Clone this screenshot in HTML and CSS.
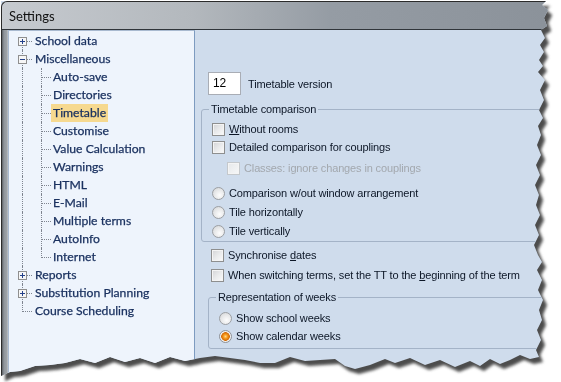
FILE: index.html
```html
<!DOCTYPE html>
<html>
<head>
<meta charset="utf-8">
<link rel="stylesheet" href="styles.css">
</head>
<body>
<div class="shot">
  <div class="win">
    <div class="titlebar"><span class="title">Settings</span></div>
    <div class="main">
      <div class="frame"></div>
      <div class="tree">
        <div class="node lvl0"><span class="c f"><span class="bx"><svg width="9" height="9" viewBox="0 0 9 9"><rect x="0.5" y="0.5" width="8" height="8" fill="#f6f6f6" stroke="#8f8f8f"/><path d="M2 4.5h5M4.5 2v5" stroke="#24418a"/></svg></span></span><span class="lbl">School data</span></div>
        <div class="node lvl0"><span class="c t"><span class="bx"><svg width="9" height="9" viewBox="0 0 9 9"><rect x="0.5" y="0.5" width="8" height="8" fill="#f6f6f6" stroke="#8f8f8f"/><path d="M2 4.5h5" stroke="#24418a"/></svg></span></span><span class="lbl">Miscellaneous</span></div>
        <div class="node lvl1"><span class="c v"></span><span class="c t"></span><span class="lbl">Auto-save</span></div>
        <div class="node lvl1"><span class="c v"></span><span class="c t"></span><span class="lbl">Directories</span></div>
        <div class="node lvl1"><span class="c v"></span><span class="c t"></span><span class="lbl sel">Timetable</span></div>
        <div class="node lvl1"><span class="c v"></span><span class="c t"></span><span class="lbl">Customise</span></div>
        <div class="node lvl1"><span class="c v"></span><span class="c t"></span><span class="lbl">Value Calculation</span></div>
        <div class="node lvl1"><span class="c v"></span><span class="c t"></span><span class="lbl">Warnings</span></div>
        <div class="node lvl1"><span class="c v"></span><span class="c t"></span><span class="lbl">HTML</span></div>
        <div class="node lvl1"><span class="c v"></span><span class="c t"></span><span class="lbl">E-Mail</span></div>
        <div class="node lvl1"><span class="c v"></span><span class="c t"></span><span class="lbl">Multiple terms</span></div>
        <div class="node lvl1"><span class="c v"></span><span class="c t"></span><span class="lbl">AutoInfo</span></div>
        <div class="node lvl1"><span class="c v"></span><span class="c l"></span><span class="lbl">Internet</span></div>
        <div class="node lvl0"><span class="c t"><span class="bx"><svg width="9" height="9" viewBox="0 0 9 9"><rect x="0.5" y="0.5" width="8" height="8" fill="#f6f6f6" stroke="#8f8f8f"/><path d="M2 4.5h5M4.5 2v5" stroke="#24418a"/></svg></span></span><span class="lbl">Reports</span></div>
        <div class="node lvl0"><span class="c t"><span class="bx"><svg width="9" height="9" viewBox="0 0 9 9"><rect x="0.5" y="0.5" width="8" height="8" fill="#f6f6f6" stroke="#8f8f8f"/><path d="M2 4.5h5M4.5 2v5" stroke="#24418a"/></svg></span></span><span class="lbl">Substitution Planning</span></div>
        <div class="node lvl0"><span class="c l"></span><span class="lbl">Course Scheduling</span></div>
      </div>
      <div class="content">
        <div class="verrow"><span class="inp">12</span><span class="txt">Timetable version</span></div>
        <fieldset class="grp g1">
          <legend>Timetable comparison</legend>
          <div class="opt r1"><span class="cb"></span><span><u>W</u>ithout rooms</span></div>
          <div class="opt"><span class="cb"></span><span>Detailed comparison for couplings</span></div>
          <div class="opt dis r3"><span class="cb"></span><span>Classes: ignore changes in couplings</span></div>
          <div class="opt r4"><span class="rb"></span><span>Comparison w/out window arrangement</span></div>
          <div class="opt r5"><span class="rb"></span><span>Tile horizontally</span></div>
          <div class="opt r5"><span class="rb"></span><span>Tile vertically</span></div>
        </fieldset>
        <div class="opt s1"><span class="cb"></span><span>Synchronise <u>d</u>ates</span></div>
        <div class="opt s2"><span class="cb"></span><span>When switching terms, set the TT to the <u>b</u>eginning of the term</span></div>
        <fieldset class="grp g2">
          <legend>Representation of weeks</legend>
          <div class="opt w1"><span class="rb"></span><span>Show school weeks</span></div>
          <div class="opt"><span class="rb on"></span><span>Show calendar weeks</span></div>
        </fieldset>
      </div>
    </div>
  </div>
</div>
</body>
</html>
```
FILE: styles.css
```css
html, body {
  margin: 0;
  background: #ffffff;
}
.shot {
  width: 561px;
  height: 382px;
  box-sizing: border-box;
  padding: 1px 0 0 1px;
  filter: drop-shadow(4px 5px 1.5px rgba(45, 45, 45, 0.85));
  overflow: hidden;
}
.win {
  width: 548px;
  height: 378px;
  display: flex;
  flex-direction: column;
  background: #cfdcec;
  clip-path: polygon(0 0, 545px 0, 541px 4px, 547px 9px, 543px 17px, 546px 25px, 540px 29px, 544px 37px, 539px 44px, 543px 51px, 538px 59px, 542px 65px, 537px 71px, 544px 79px, 539px 89px, 543px 99px, 538px 109px, 542px 117px, 537px 125px, 540px 134px, 536px 144px, 540px 154px, 535px 164px, 539px 174px, 534px 184px, 538px 194px, 535px 204px, 539px 214px, 534px 224px, 538px 234px, 533px 244px, 537px 254px, 541px 261px, 536px 269px, 541px 279px, 537px 289px, 542px 299px, 538px 309px, 541px 319px, 536px 329px, 540px 339px, 535px 349px, 538px 356px, 529px 358px, 519px 354px, 509px 359px, 499px 363px, 489px 358px, 479px 365px, 469px 360px, 454px 366px, 439px 359px, 424px 364px, 409px 357px, 394px 362px, 384px 358px, 369px 364px, 354px 368px, 344px 365px, 334px 358px, 319px 359px, 304px 360px, 289px 356px, 274px 362px, 259px 362px, 244px 359px, 229px 357px, 214px 355px, 199px 357px, 184px 360px, 169px 356px, 154px 362px, 139px 357px, 124px 361px, 109px 356px, 94px 362px, 79px 358px, 64px 362px, 49px 364px, 34px 365px, 19px 370px, 9px 371px, 0 375px);
}
.titlebar {
  height: 27px;
  flex: none;
  display: flex;
  align-items: center;
  padding-left: 7px;
  border-top: 1px solid #2b2b2b;
  border-left: 1px solid #2b2b2b;
  border-bottom: 1px solid #30353a;
  border-radius: 6px 0 0 0;
  background: linear-gradient(90deg, #c6cacf 0%, #b3b8bd 35%, #959ca4 60%, #8b929a 100%);
}
.title {
  font-family: "Lato", "Noto Sans", sans-serif;
  font-size: 13px;
  color: #111111;
}
.main {
  flex: 1;
  display: flex;
  min-height: 0;
}
.frame {
  width: 6px;
  flex: none;
  background: linear-gradient(90deg, #5d6166 0px, #8f959b 2px, #9ea3a8 5px, #c7ccd2 6px);
  border-left: 1px solid #2b2b2b;
}
.tree {
  width: 187px;
  flex: none;
  box-sizing: border-box;
  background: #eef4fc;
  border: 1px solid #a9bad0;
  border-right-color: #7d9bc0;
  padding: 1px 0 0 4px;
  font-family: "Lato", "Noto Sans", sans-serif;
  font-size: 12.2px;
  color: #1b3260;
  -webkit-text-stroke: 0.25px #1b3260;
}
.node {
  height: 18px;
  display: flex;
  align-items: center;
}
.c {
  width: 19px;
  height: 18px;
  flex: none;
  position: relative;
}
.c::before, .c::after {
  content: "";
  position: absolute;
}
.c.v::before, .c.t::before {
  left: 9px;
  top: 0;
  bottom: 0;
  border-left: 1px dotted #7f8590;
}
.c.f::before {
  left: 9px;
  top: 9px;
  bottom: 0;
  border-left: 1px dotted #7f8590;
}
.c.l::before {
  left: 9px;
  top: 0;
  height: 10px;
  border-left: 1px dotted #7f8590;
}
.c.t::after, .c.f::after, .c.l::after {
  left: 10px;
  right: 0;
  top: 9px;
  border-top: 1px dotted #7f8590;
}
.bx {
  position: absolute;
  left: 5px;
  top: 5px;
  width: 9px;
  height: 9px;
  z-index: 1;
  display: block;
  -webkit-text-stroke: 0;
}
.bx svg {
  display: block;
}
.lbl {
  padding: 0 2px;
  line-height: 18px;
  white-space: nowrap;
}
.lvl0 .lbl {
  margin-left: 1px;
}
.lbl.sel {
  background: #f6d98f;
}
.content {
  flex: 1;
  font-family: "Liberation Sans", Arial, sans-serif;
  font-size: 11px;
  letter-spacing: -0.13px;
  color: #0c1626;
  min-width: 0;
}
.verrow {
  display: flex;
  align-items: center;
  margin: 42px 0 0 13px;
}
.inp {
  width: 33px;
  height: 23px;
  box-sizing: border-box;
  border: 1px solid #a9adb5;
  background: #ffffff;
  padding-left: 4px;
  font-size: 12px;
  line-height: 21px;
  color: #000;
}
.txt {
  margin-left: 7px;
}
.grp {
  margin: 0;
  min-width: 0;
  width: 420px;
  border: 1px solid #a4b3c7;
  border-radius: 3px;
  box-sizing: border-box;
}
.grp legend {
  padding: 0 2px;
  margin-left: -3px;
  line-height: 14px;
}
.g1 {
  margin: 7px 0 0 6px;
  padding: 0 0 1px 10px;
}
.g2 {
  margin: 6px 0 0 13px;
  padding: 0 0 3px 10px;
}
.opt {
  display: flex;
  align-items: center;
  height: 18px;
  white-space: nowrap;
}
.r1 { margin-top: 4px; }
.r3 { margin-top: 3px; padding-left: 15px; }
.r4 { margin-top: 7px; }
.r5 { margin-top: 1px; }
.s1 { margin: 4px 0 0 16px; }
.s2 { margin: 2px 0 0 16px; }
.w1 { margin-top: 5px; }
.cb {
  width: 13px;
  height: 13px;
  box-sizing: border-box;
  flex: none;
  border: 1px solid #8e8f8f;
  background: linear-gradient(135deg, #d2d3d5 0%, #e9eaeb 50%, #fbfbfb 100%);
  box-shadow: inset 0 0 0 1px #f4f4f4;
  margin-right: 4px;
}
.dis {
  color: #a3a8ae;
}
.dis .cb {
  border-color: #c4c8cc;
  background: linear-gradient(135deg, #e6e8ea, #f6f7f8);
}
.rb {
  width: 13px;
  height: 13px;
  box-sizing: border-box;
  flex: none;
  border-radius: 50%;
  border: 1px solid #9c9fa3;
  background: radial-gradient(circle at 60% 65%, #fdfdfd 0%, #e6e7e8 55%, #cfd1d3 100%);
  margin-right: 4px;
}
.rb.on {
  border-color: #8e9196;
  background: radial-gradient(circle at 50% 50%, #ffd98a 0px, #f89a1c 2px, #d26a05 4px, #f3f3f3 4.6px, #e2e3e4 100%);
}
u {
  text-decoration: underline;
  text-underline-offset: 1px;
}
```
